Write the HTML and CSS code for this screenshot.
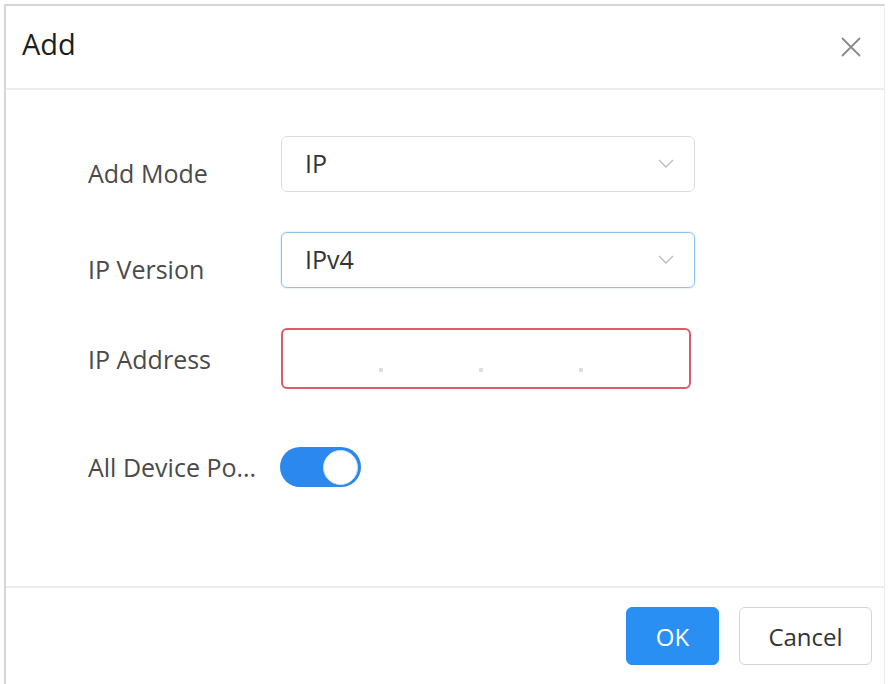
FILE: index.html
```html
<html>
<head>
  <title>Add</title>
  <link rel="stylesheet" href="styles.css">
</head>
<body>
  <div class="dialog">
    <div class="dialog-header">
      <h2>Add</h2>
      <a href="#!" class="close">
        <svg width="22" height="22" viewBox="0 0 22 22">
          <path d="M2 2 L20 20 M20 2 L2 20" stroke="#8a8a8a" stroke-width="1.8" fill="none" />
        </svg>
      </a>
    </div>
    <div class="dialog-body">
      <div class="row">
        <label class="low">Add Mode</label>
        <div class="select">
          <span>IP</span>
          <svg class="chevron" width="16" height="10" viewBox="0 0 16 10">
            <path d="M1 1 L8 8 L15 1" stroke="#bdbdbd" stroke-width="1.4" fill="none" />
          </svg>
        </div>
      </div>
      <div class="row">
        <label class="low">IP Version</label>
        <div class="select focused">
          <span>IPv4</span>
          <svg class="chevron" width="16" height="10" viewBox="0 0 16 10">
            <path d="M1 1 L8 8 L15 1" stroke="#bdbdbd" stroke-width="1.4" fill="none" />
          </svg>
        </div>
      </div>
      <div class="row">
        <label>IP Address</label>
        <div class="ip-input">
          <span class="seg"></span><span class="dot"></span>
          <span class="seg"></span><span class="dot"></span>
          <span class="seg"></span><span class="dot"></span>
          <span class="seg"></span>
        </div>
      </div>
      <div class="row toggle-row">
        <label>All Device Po...</label>
        <div class="toggle"><span class="knob"></span></div>
      </div>
    </div>
    <div class="dialog-footer">
      <button class="btn primary">OK</button>
      <button class="btn">Cancel</button>
    </div>
  </div>
</body>
</html>
```

FILE: styles.css
```css
body {
  margin: 0;
  background: #fff;
}
* {
  font-family: "Open Sans", sans-serif;
  box-sizing: border-box;
}
.dialog {
  margin: 4px 0 0 4px;
  width: 881px;
  height: 680px;
  border-top: 2px solid #d6d6d6;
  border-left: 2px solid #d6d6d6;
  border-right: 1px solid #ececec;
  display: flex;
  flex-direction: column;
}
.dialog-header {
  height: 84px;
  flex: none;
  display: flex;
  align-items: center;
  justify-content: space-between;
  padding: 0 22px 0 16px;
  border-bottom: 2px solid #ececec;
}
.dialog-header h2 {
  margin: 0;
  font-size: 29px;
  font-weight: 400;
  color: #1e1e1e;
  padding-bottom: 8px;
}
.close {
  display: block;
  line-height: 0;
}
.dialog-body {
  flex: none;
  height: 498px;
  padding: 46px 0 0 82px;
  border-bottom: 2px solid #ececec;
}
.row {
  display: flex;
  align-items: center;
  margin-bottom: 40px;
}
.row label {
  width: 193px;
  flex: none;
  font-size: 25px;
  color: #4a4a4a;
}
.row label.low {
  padding-top: 18px;
}
.select {
  width: 414px;
  height: 56px;
  border: 1px solid #dcdcdc;
  border-radius: 6px;
  display: flex;
  align-items: center;
  justify-content: space-between;
  padding: 0 20px 0 23px;
  font-size: 25px;
  color: #333;
}
.select span {
  padding-bottom: 2px;
}
.select.focused {
  border-color: #8fc0e6;
  box-shadow: 0 0 2px rgba(120, 180, 230, 0.5);
}
.ip-input {
  width: 410px;
  height: 61px;
  border: 2px solid #dc5a69;
  border-radius: 6px;
  display: flex;
  align-items: flex-end;
  padding: 0 10px 15px 0;
}
.ip-input .seg {
  flex: 1;
}
.ip-input .dot {
  width: 4px;
  height: 4px;
  background: #dddddd;
  border-radius: 1px;
}
.toggle-row {
  margin-top: 58px;
}
.toggle {
  width: 81px;
  height: 40px;
  border-radius: 20px;
  background: #2a88ee;
  display: flex;
  align-items: center;
  justify-content: flex-end;
  padding-right: 3px;
  margin-left: -1px;
}
.knob {
  width: 35px;
  height: 35px;
  border-radius: 50%;
  background: #fff;
  border: 1px solid #cfe2f5;
}
.dialog-footer {
  flex: 1;
  display: flex;
  justify-content: flex-end;
  align-items: flex-start;
  gap: 20px;
  padding: 19px 12px 0 0;
}
.btn {
  height: 58px;
  width: 133px;
  border: 1px solid #d4d4d4;
  border-radius: 6px;
  background: #fff;
  font-size: 24px;
  color: #333;
}
.btn.primary {
  width: 93px;
  background: #2a8ff2;
  border-color: #2a8ff2;
  color: #fff;
}
```
